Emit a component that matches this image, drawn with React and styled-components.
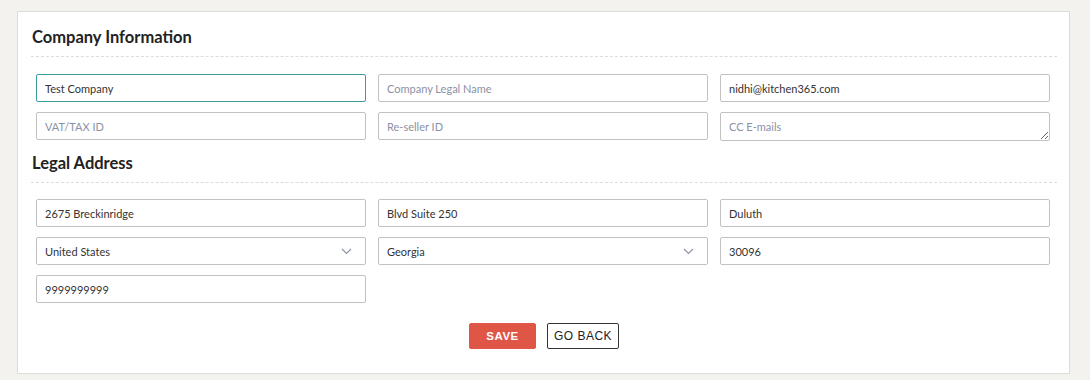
import React from 'react';
import styled, { createGlobalStyle } from 'styled-components';

const GlobalStyle = createGlobalStyle`
    body {
        margin: 0;
        background: #f3f2ee;
        font-family: "Lato", "Liberation Sans", sans-serif;
    }
`

const Page = styled.div`
    padding: 11px 20px 7px 17px;
`

const Card = styled.div`
    background: #fff;
    border: 1px solid #dcdcdc;
    padding: 14px 12px 24px 13px;
`

const SectionTitle = styled.h3`
    margin: ${props => props.$first ? '0' : '11px'} 0 0;
    font-size: 16.5px;
    line-height: 22px;
    font-weight: 700;
    color: #222;
    padding: 0 0 8px 1px;
    border-bottom: 1px dashed #dcdcdc;
`

const Grid = styled.div`
    display: grid;
    grid-template-columns: repeat(3, 1fr);
    column-gap: 12px;
    row-gap: 10px;
    padding: 0 7px 0 5px;
    margin-top: ${props => props.$top || 17}px;
`

const Input = styled.input`
    box-sizing: border-box;
    width: 100%;
    height: 28px;
    border: 1px solid ${props => props.$active ? '#3a9c9c' : '#c2c2c2'};
    border-radius: 2px;
    padding: 0 8px;
    font-family: "Lato", "Liberation Sans", sans-serif;
    font-size: 11px;
    color: #333;
    outline: none;

    &::placeholder {
        color: #8b91a5;
    }
`

const TextArea = styled.textarea`
    box-sizing: border-box;
    width: 100%;
    height: 29px;
    border: 1px solid #c2c2c2;
    border-radius: 2px;
    padding: 7px 8px 0;
    font-family: "Lato", "Liberation Sans", sans-serif;
    font-size: 11px;
    color: #333;
    outline: none;
    resize: vertical;
    display: block;

    &::placeholder {
        color: #8b91a5;
    }
`

const SelectWrap = styled.div`
    position: relative;
`

const Select = styled.select`
    box-sizing: border-box;
    width: 100%;
    height: 28px;
    border: 1px solid #c2c2c2;
    border-radius: 2px;
    padding: 0 8px;
    font-family: "Lato", "Liberation Sans", sans-serif;
    font-size: 11px;
    color: #333;
    background: #fff;
    appearance: none;
    outline: none;
`

const Chevron = styled.svg`
    position: absolute;
    right: 14px;
    top: 11px;
    pointer-events: none;
`

const Actions = styled.div`
    display: flex;
    justify-content: center;
    gap: 11px;
    margin-top: 20px;
`

const Button = styled.button`
    box-sizing: border-box;
    height: 26px;
    width: ${props => props.$primary ? '67px' : '72px'};
    padding: 0;
    border-radius: 2px;
    border: 1px solid ${props => props.$primary ? '#e05646' : '#333'};
    background: ${props => props.$primary ? '#e05646' : '#fff'};
    color: ${props => props.$primary ? '#fff' : '#222'};
    font-family: "Liberation Sans", Arial, sans-serif;
    font-size: ${props => props.$primary ? '11.5px' : '12px'};
    font-weight: ${props => props.$primary ? 700 : 400};
    letter-spacing: 0.5px;
`

function Dropdown(props) {
    return (
        <SelectWrap>
            <Select defaultValue={props.value}>
                <option>{props.value}</option>
            </Select>
            <Chevron width="11" height="7" viewBox="0 0 11 7">
                <path d="M1 1l4.5 4.5L10 1" fill="none" stroke="#8d95a8" strokeWidth="1.2" />
            </Chevron>
        </SelectWrap>
    )
}

function App() {
    return (
        <Page>
            <GlobalStyle />
            <Card>
                <SectionTitle $first>Company Information</SectionTitle>
                <Grid>
                    <Input $active defaultValue="Test Company" autoFocus />
                    <Input placeholder="Company Legal Name" />
                    <Input defaultValue="nidhi@kitchen365.com" />
                    <Input placeholder="VAT/TAX ID" />
                    <Input placeholder="Re-seller ID" />
                    <TextArea rows={1} placeholder="CC E-mails" />
                </Grid>

                <SectionTitle>Legal Address</SectionTitle>
                <Grid $top={16}>
                    <Input defaultValue="2675 Breckinridge" />
                    <Input defaultValue="Blvd Suite 250" />
                    <Input defaultValue="Duluth" />
                    <Dropdown value="United States" />
                    <Dropdown value="Georgia" />
                    <Input defaultValue="30096" />
                    <Input defaultValue="9999999999" />
                </Grid>

                <Actions>
                    <Button $primary>SAVE</Button>
                    <Button>GO BACK</Button>
                </Actions>
            </Card>
        </Page>
    )
}

export default App;
